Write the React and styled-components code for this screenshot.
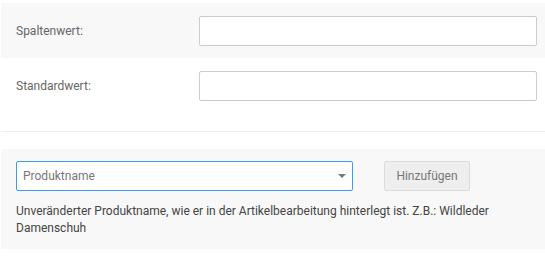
import React from "react";
import styled, { createGlobalStyle } from "styled-components";

const Global = createGlobalStyle`
  body {
    margin: 0;
    background: #fff;
    font-family: Roboto, "Liberation Sans", sans-serif;
  }
`;

const Page = styled.div`
  width: 545px;
  padding: 3px 0 0 1px;
  box-sizing: border-box;
`;

const FieldRow = styled.div`
  display: flex;
  align-items: center;
  height: ${(props) => props.height}px;
  padding: 0 8px 0 15px;
  background: ${(props) => (props.shaded ? "#f8f8f8" : "#fff")};
  box-sizing: border-box;
`;

const Label = styled.label`
  width: 183px;
  font-size: 12px;
  color: #666;
`;

const TextInput = styled.div`
  width: 338px;
  height: 30px;
  box-sizing: border-box;
  background: #fff;
  border: 1px solid #ccc;
  border-radius: 2px;
`;

const Divider = styled.hr`
  margin: 18px 0 17px;
  border: none;
  border-top: 1px solid #eee;
`;

const AddSection = styled.div`
  background: #f8f8f8;
  padding: 12px 15px 11px;
  height: 100px;
  box-sizing: border-box;
`;

const Controls = styled.div`
  display: flex;
  align-items: center;
  gap: 31px;
`;

const Select = styled.div`
  width: 337px;
  height: 30px;
  box-sizing: border-box;
  background: #fff;
  border: 1px solid #3d9bf5;
  border-radius: 2px;
  display: flex;
  align-items: center;
  justify-content: space-between;
  padding: 0 6px 0 6px;
  font-size: 12px;
  color: #777;
`;

const Caret = styled.span`
  width: 0;
  height: 0;
  border-left: 4px solid transparent;
  border-right: 4px solid transparent;
  border-top: 4px solid #777;
  margin-right: 0;
`;

const Button = styled.button`
  width: 86px;
  height: 30px;
  box-sizing: border-box;
  background: #eee;
  border: 1px solid #dcdcdc;
  border-radius: 2px;
  font-family: inherit;
  font-size: 12px;
  color: #777;
  padding: 0;
`;

const Help = styled.p`
  margin: 12px 0 0;
  font-size: 12px;
  line-height: 17px;
  color: #444;
  width: 480px;
`;

export default function App() {
  return (
    <Page>
      <Global />
      <FieldRow shaded height={55}>
        <Label>Spaltenwert:</Label>
        <TextInput />
      </FieldRow>
      <FieldRow height={55}>
        <Label>Standardwert:</Label>
        <TextInput />
      </FieldRow>
      <Divider />
      <AddSection>
        <Controls>
          <Select>
            Produktname
            <Caret />
          </Select>
          <Button>Hinzufügen</Button>
        </Controls>
        <Help>
          Unveränderter Produktname, wie er in der Artikelbearbeitung hinterlegt
          ist. Z.B.: Wildleder Damenschuh
        </Help>
      </AddSection>
    </Page>
  );
}
